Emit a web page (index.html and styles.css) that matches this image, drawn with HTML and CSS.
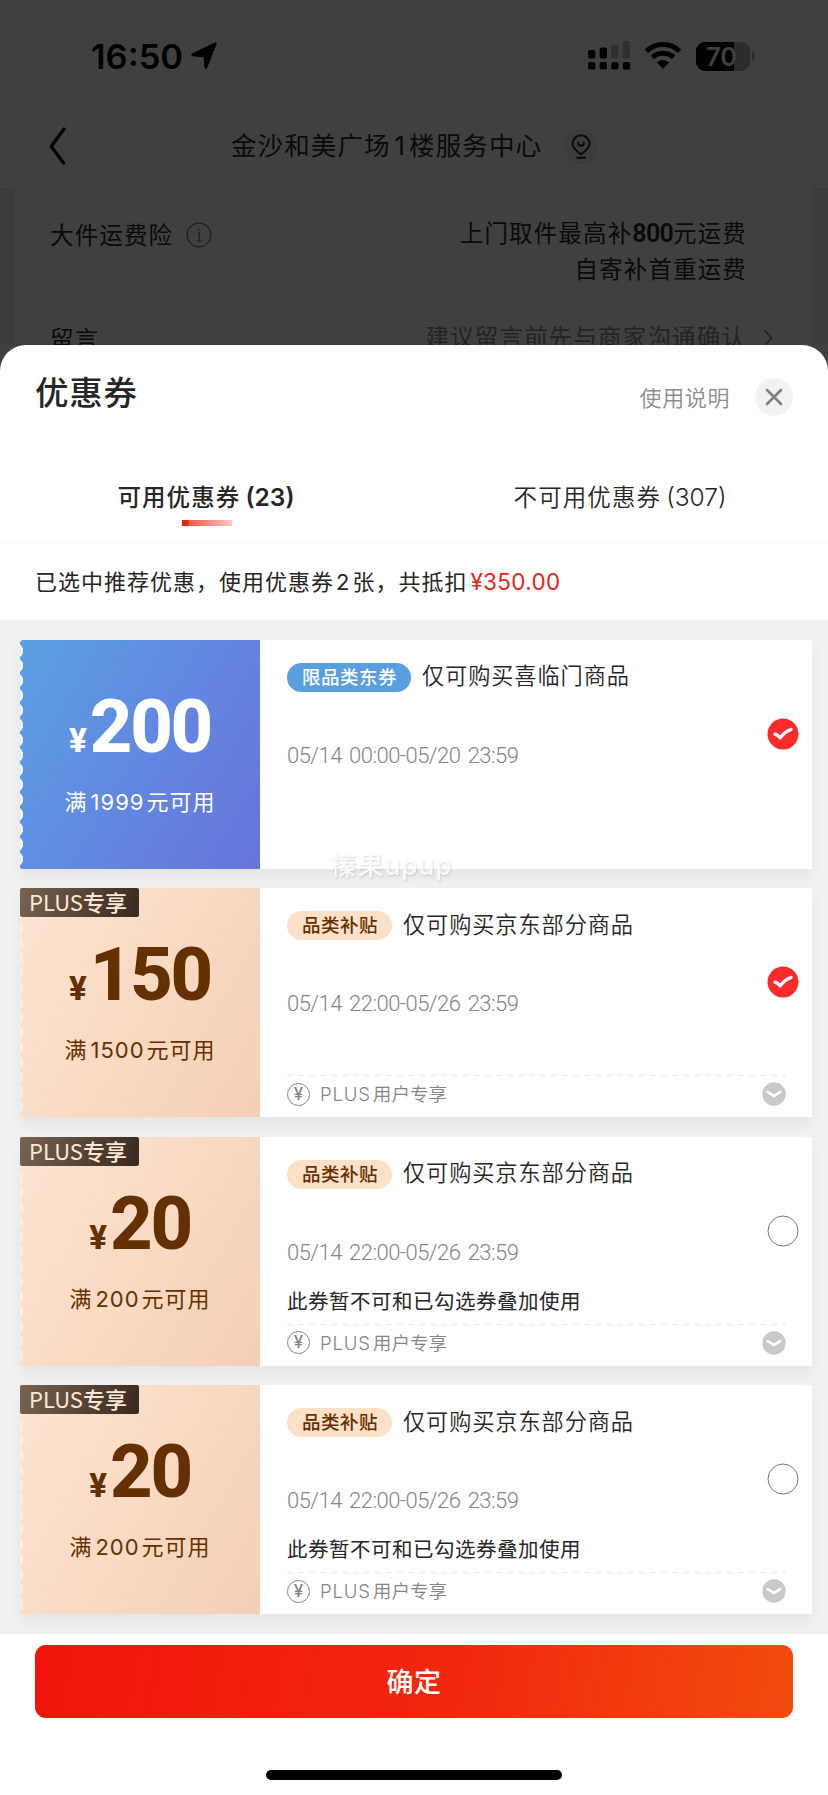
FILE: index.html
```html
<!DOCTYPE html>
<html lang="zh-CN">
<head>
<meta charset="utf-8">
<title>优惠券</title>
<link rel="stylesheet" href="styles.css">
</head>
<body>
<div class="screen">
  <div class="backdrop">
    <div class="status">
      <span class="time">16:50</span>
      <svg class="loc" width="28" height="28" viewBox="0 0 28 28"><path d="M26.6 2 17.400 25.200q-1.600 3.200-3.200-.2L13.700 15.300 3 14.200q-3.400-1.300-.4-3L23.800 1q3.600-1.200 2.800 1z"/></svg>
      <svg class="signal" width="43" height="29" viewBox="0 0 43 29">
        <rect x="0" y="9" width="7.4" height="8.5" rx="2.2"/><rect x="11.6" y="6.5" width="7.4" height="11" rx="2.2"/>
        <rect class="off" x="23.2" y="3.5" width="7" height="14" rx="2"/><rect class="off" x="34.8" y="0" width="7" height="17.5" rx="2"/>
        <rect x="0" y="21" width="7.4" height="7.6" rx="2.2"/><rect x="11.6" y="21" width="7.4" height="7.6" rx="2.2"/><rect x="23.2" y="21" width="7.4" height="7.6" rx="2.2"/><rect x="34.8" y="21" width="7.4" height="7.6" rx="2.2"/>
      </svg>
      <svg class="wifi" width="38" height="28" viewBox="0 0 38 28">
        <path class="arc" d="M2.4 9.2a24 24 0 0 1 33.2 0M8.4 15.4a15.6 15.6 0 0 1 21.2 0"/><path d="M19 26.8 12.8 20.6q6.2-5 12.4 0z"/>
      </svg>
      <span class="battery"><span class="level"></span><span class="pct">70</span></span>
      <span class="nub"></span>
    </div>
    <div class="nav">
      <svg class="back" width="20" height="40" viewBox="0 0 20 40"><path d="M16 3 3.2 20.5 15.6 37"/></svg>
      <span class="store">金沙和美广场<i>1</i>楼服务中心</span>
      <span class="pin"><svg width="20" height="26" viewBox="0 0 20 26"><path d="M10 20.3C4.500 16.500 1.500 13.500 1.500 9.700a8.500 8.500 0 0 1 17 0c0 3.800-3 6.800-8.500 10.600zM7.200 8.400v.6a2.800 2.800 0 0 0 5.600 0v-.6M6 23.800h8"/></svg></span>
    </div>
    <div class="form">
      <div class="row">
        <span class="label">大件运费险</span>
        <svg class="info" width="26" height="26" viewBox="0 0 26 26"><circle cx="13" cy="13" r="11.800"/><path d="M11.300 10.800h2V18.600M10.800 18.800h5M13 7v1.600"/></svg>
        <span class="value"><span>上门取件最高补<b>800</b>元运费</span><span>自寄补首重运费</span></span>
      </div>
      <div class="row memo">
        <span class="label">留言</span>
        <span class="hint">建议留言前先与商家沟通确认</span>
        <svg class="more" width="10" height="18" viewBox="0 0 10 18"><path d="M1.500 1.500 8.500 9l-7 7.500"/></svg>
      </div>
    </div>
  </div>

  <div class="sheet">
    <div class="head">
      <h1>优惠券</h1>
      <span class="help">使用说明</span>
      <span class="close"><svg width="18" height="18" viewBox="0 0 18 18"><path d="M2 2 16 16M16 2 2 16"/></svg></span>
    </div>
    <div class="tabs">
      <div class="tab active"><span>可用优惠券<em>(23)</em></span></div>
      <div class="tab"><span>不可用优惠券<em>(307)</em></span></div>
    </div>
    <div class="summary">已选中推荐优惠，使用优惠券<i>2</i>张，共抵扣<strong>¥350.00</strong></div>

    <div class="list">
      <div class="card blue">
        <div class="face">
          <div class="amount"><small>¥</small>200</div>
          <div class="rule">满<i>1999</i>元可用</div>
        </div>
        <div class="body">
          <div class="title"><span class="tag">限品类东券</span><span>仅可购买喜临门商品</span></div>
          <div class="date">05/14 00:00-05/20 23:59</div>
          <svg class="radio" width="32" height="32" viewBox="0 0 32 32"><circle class="on" cx="16" cy="16" r="15.500"/><path class="tick" d="M8 16.200q2.200.2 5.200 3.800Q17 14 24 11.400"/></svg>
        </div>
        <span class="watermark">榛果upup</span>
      </div>

      <div class="card plus">
        <div class="face">
          <span class="badge"><i>PLUS</i>专享</span>
          <div class="amount"><small>¥</small>150</div>
          <div class="rule">满<i>1500</i>元可用</div>
        </div>
        <div class="body">
          <div class="title"><span class="tag">品类补贴</span><span>仅可购买京东部分商品</span></div>
          <div class="date">05/14 22:00-05/26 23:59</div>
          <div class="note"></div>
          <div class="foot"><span class="yen">¥</span><span><i>PLUS</i>用户专享</span><svg class="expand" width="24" height="24" viewBox="0 0 24 24"><circle cx="12" cy="12" r="11.700"/><path d="M5.800 10 12 14.200 18.200 10"/></svg></div>
          <svg class="radio" width="32" height="32" viewBox="0 0 32 32"><circle class="on" cx="16" cy="16" r="15.500"/><path class="tick" d="M8 16.200q2.200.2 5.200 3.800Q17 14 24 11.400"/></svg>
        </div>
      </div>

      <div class="card plus">
        <div class="face">
          <span class="badge"><i>PLUS</i>专享</span>
          <div class="amount"><small>¥</small>20</div>
          <div class="rule">满<i>200</i>元可用</div>
        </div>
        <div class="body">
          <div class="title"><span class="tag">品类补贴</span><span>仅可购买京东部分商品</span></div>
          <div class="date">05/14 22:00-05/26 23:59</div>
          <div class="note">此券暂不可和已勾选券叠加使用</div>
          <div class="foot"><span class="yen">¥</span><span><i>PLUS</i>用户专享</span><svg class="expand" width="24" height="24" viewBox="0 0 24 24"><circle cx="12" cy="12" r="11.700"/><path d="M5.800 10 12 14.200 18.200 10"/></svg></div>
          <svg class="radio" width="32" height="32" viewBox="0 0 32 32"><circle class="empty" cx="16" cy="16" r="15"/></svg>
        </div>
      </div>

      <div class="card plus">
        <div class="face">
          <span class="badge"><i>PLUS</i>专享</span>
          <div class="amount"><small>¥</small>20</div>
          <div class="rule">满<i>200</i>元可用</div>
        </div>
        <div class="body">
          <div class="title"><span class="tag">品类补贴</span><span>仅可购买京东部分商品</span></div>
          <div class="date">05/14 22:00-05/26 23:59</div>
          <div class="note">此券暂不可和已勾选券叠加使用</div>
          <div class="foot"><span class="yen">¥</span><span><i>PLUS</i>用户专享</span><svg class="expand" width="24" height="24" viewBox="0 0 24 24"><circle cx="12" cy="12" r="11.700"/><path d="M5.800 10 12 14.200 18.200 10"/></svg></div>
          <svg class="radio" width="32" height="32" viewBox="0 0 32 32"><circle class="empty" cx="16" cy="16" r="15"/></svg>
        </div>
      </div>
    </div>

    <div class="actions"><button class="confirm">确定</button></div>
    <div class="home"></div>
  </div>
</div>
</body>
</html>
```
FILE: styles.css
```css
* { box-sizing: border-box; margin: 0; padding: 0; }
body {
  width: 828px;
  height: 1795px;
  overflow: hidden;
  background: #404040;
  color: #262626;
  font-family: Inter, "Noto Sans CJK SC", sans-serif;
}
i, em { font-style: normal; }
svg, span { flex: none; }
.screen { display: flex; flex-direction: column; width: 828px; height: 1795px; white-space: nowrap; }

/* Dimmed page behind the sheet */
.backdrop { height: 345px; color: #0a0a0a; overflow: hidden; }
.status { display: flex; align-items: center; height: 112px; padding-left: 91px; }
.time { width: 99px; font-size: 34.5px; font-weight: 600; color: #000; }
.loc { fill: #000; }
.signal { margin-left: 370px; margin-top: -1px; fill: #000; }
.signal .off { fill: #2f2f2f; }
.wifi { margin-left: 13px; fill: #000; }
.wifi .arc { fill: none; stroke: #000; stroke-width: 5; }
.battery { position: relative; width: 54px; height: 29px; margin-left: 14px; border-radius: 9px; background: #2c2c2c; overflow: hidden; }
.level { display: block; width: 38px; height: 29px; background: #000; }
.pct { position: absolute; left: 10px; top: 0; font-size: 25.500px; line-height: 29px; font-weight: 600; color: #414141; }
.nub { width: 3px; height: 10px; margin-left: 2px; border-radius: 0 4px 4px 0; background: #2c2c2c; }

.nav { display: flex; align-items: center; height: 76px; padding-left: 48px; }
.back { fill: none; stroke: #050505; stroke-width: 3.4; stroke-linecap: round; stroke-linejoin: round; margin-top: -9px; }
.store { width: 333px; margin-left: 163px; font-size: 25.5px; letter-spacing: 1.1px; line-height: 36px; margin-top: -8px; }
.store i { margin: 0 3px 0 4px; }
.pin { display: grid; place-items: center; width: 34px; height: 34px; margin-top: -6px; border-radius: 50%; background: #3c3c3c; }
.pin svg { fill: none; stroke: #0a0a0a; stroke-width: 2; stroke-linecap: round; }

.form { height: 157px; padding: 28px 0 0 35px; border: solid #3c3c3c; border-width: 0 16px 0 15px; font-size: 23.5px; letter-spacing: 1.15px; }
.row { display: flex; align-items: flex-start; line-height: 36px; }
.label { padding-top: 2px; }
.info { margin: 6px 0 0 13px; fill: none; stroke: #1e1e1e; stroke-width: 1.3; }
.value { display: flex; flex-direction: column; align-items: flex-end; flex: 1; padding-right: 65px; }
.value b { font-family: Roboto, sans-serif; font-size: 25px; font-weight: 600; letter-spacing: -0.7px; }
.memo { padding-top: 32px; }
.hint { margin-left: auto; color: #232323; }
.more { margin: 9px 39px 0 17px; fill: none; stroke: #232323; stroke-width: 1.8; }

/* Coupon sheet */
.sheet { display: flex; flex-direction: column; height: 1450px; border-radius: 26px 26px 0 0; background: #fff; overflow: hidden; }
.head { display: flex; align-items: center; height: 104px; padding: 0 35px; }
h1 { font-size: 33.500px; font-weight: 500; letter-spacing: 0.7px; line-height: 40px; margin-top: -8px; flex: 1; }
.help { margin-top: -3px; color: #8c8c8c; font-size: 22px; letter-spacing: 0.6px; font-weight: 350; }
.close { display: grid; place-items: center; width: 38px; height: 38px; margin-left: 25px; border-radius: 50%; background: #f2f2f2; }
.close svg { fill: none; stroke: #808080; stroke-width: 2.600; stroke-linecap: round; }

.tabs { display: flex; height: 94px; border-bottom: 1px solid #f7f7f7; }
.tab { flex: 1; display: flex; flex-direction: column; align-items: center; padding-top: 30px; font-size: 23.500px; letter-spacing: 1.1px; line-height: 36px; font-weight: 350; }
.tab span { margin-left: -2px; }
.tab em { margin-left: 5px; letter-spacing: 0; font-size: 24.500px; }
.tab:not(.active) em { font-weight: 300; }
.tab.active { font-weight: 500; }
.tab.active em { font-weight: 600; }
.tab.active::after { content: ""; width: 50px; height: 6px; margin-top: 4px; background: linear-gradient(90deg, #e1251b 0 6px, #ec5a45 7px, #f9c8c6); }
.summary { height: 77px; padding-left: 35px; line-height: 78px; font-size: 22px; letter-spacing: 1px; }
.summary i { margin: 0 2px; }
.summary strong { margin-left: 3px; color: #e1251b; font-weight: 400; font-size: 22.500px; letter-spacing: 0.3px; }

.list { display: flex; flex-direction: column; gap: 19.500px; height: 1014px; padding: 19.500px 16px 0 20px; background: #f1f1f2; }
.card { position: relative; display: flex; height: 229px; box-shadow: 0 8px 12px rgba(0, 0, 0, 0.05); }
.face { position: relative; width: 240px; height: 229px; padding-top: 50px; text-align: center; background: #f5f0ec; }
.face::before { content: ""; position: absolute; inset: 0; -webkit-mask: radial-gradient(circle at -4.500px 50%, transparent 7.300px, #000 8px) 0 3.300px / 100% 14.880px; mask: radial-gradient(circle at -4.500px 50%, transparent 7.300px, #000 8px) 0 3.300px / 100% 14.880px; }
.blue .face { color: #fff; background: #f4f8fc; }
.blue .face::before { background: linear-gradient(120deg, #5aa0e3, #6384df 60%, #6674da); }
.plus .face { color: #653000; }
.plus .face::before { background: linear-gradient(120deg, #fde5d1, #f4cfb5); }
.badge { position: absolute; left: 0; top: 0; width: 119px; height: 29px; padding-right: 3px; border-radius: 2px; background: linear-gradient(110deg, #7a6350, #36291f); color: #fde8d6; font-size: 22px; line-height: 26px; font-weight: 500; }
.badge i { font-family: "Noto Sans CJK SC", sans-serif; font-weight: 400; }
.amount { position: relative; height: 74px; line-height: 74px; font-family: Roboto, sans-serif; font-size: 74px; font-weight: 800; letter-spacing: -2.200px; }
.amount small { font-size: 33px; letter-spacing: 0; margin-right: 3px; }
.rule { position: relative; margin-top: 20px; line-height: 36px; font-size: 22px; letter-spacing: 1px; }
.rule i { margin: 0 2px 0 3px; }

.body { position: relative; width: 552px; padding: 23px 26px 0 27px; background: #fff; }
.title { display: flex; align-items: center; height: 29px; font-size: 22.200px; letter-spacing: 0.9px; line-height: 29px; font-weight: 350; }
.title span:last-child { margin-top: -3px; }
.tag { height: 29px; margin-right: 11px; padding: 0 14px 0 15px; border-radius: 15px; background: #fde0c8; color: #653000; font-size: 18.500px; letter-spacing: 0.5px; line-height: 28px; font-weight: 500; }
.blue .tag { background: #599fe0; color: #fff; }
.date { height: 30px; margin-top: 49px; line-height: 30px; font-family: Roboto, sans-serif; font-size: 22px; font-weight: 300; letter-spacing: -0.550px; word-spacing: 2.500px; color: #858585; }
.note { height: 56px; padding-top: 19px; font-size: 20.500px; letter-spacing: 0.5px; line-height: 30px; }
.foot { display: flex; align-items: center; height: 38px; background: repeating-linear-gradient(90deg, #e9e9e9 0 6px, transparent 6px 11px) 0 0 / 500px 1px no-repeat; color: #858585; font-size: 18.600px; font-weight: 350; }
.foot span:nth-child(2) { margin-top: -3px; }
.foot i { margin-right: 2px; letter-spacing: 0.8px; font-weight: 300; }
.yen { width: 23px; height: 23px; margin-right: 10px; border: 1px solid #858585; border-radius: 50%; font-size: 17px; line-height: 21px; text-align: center; font-weight: 500; }
.expand { margin-left: auto; }
.expand circle { fill: #c9c9c9; }
.expand path { fill: none; stroke: #fff; stroke-width: 2.600; stroke-linecap: round; stroke-linejoin: round; }
.radio { position: absolute; right: 13.500px; top: 78px; }
.radio .on { fill: #fa2c2b; }
.radio .tick { fill: none; stroke: #fff; stroke-width: 3.200; stroke-linecap: round; stroke-linejoin: round; }
.radio .empty { fill: #fff; stroke: #777; stroke-width: 1; }
.watermark { position: absolute; left: 310px; top: 207px; font-size: 26.500px; letter-spacing: 0.8px; line-height: 36px; font-weight: 500; color: rgba(255, 255, 255, 0.9); text-shadow: 1px 1px 2px rgba(0, 0, 0, 0.15); }

.actions { height: 136px; padding: 11px 35px 0; }
.confirm { display: block; width: 758px; height: 73px; padding-bottom: 2px; border: 0; border-radius: 11px; background: linear-gradient(100deg, #f2140c, #f1270d 55%, #f24c0d); color: #fff; font-family: "Noto Sans CJK SC", sans-serif; font-size: 27px; font-weight: 500; letter-spacing: 0.5px; }
.home { width: 296px; height: 10px; margin: 0 auto; border-radius: 5px; background: #000; }
```
